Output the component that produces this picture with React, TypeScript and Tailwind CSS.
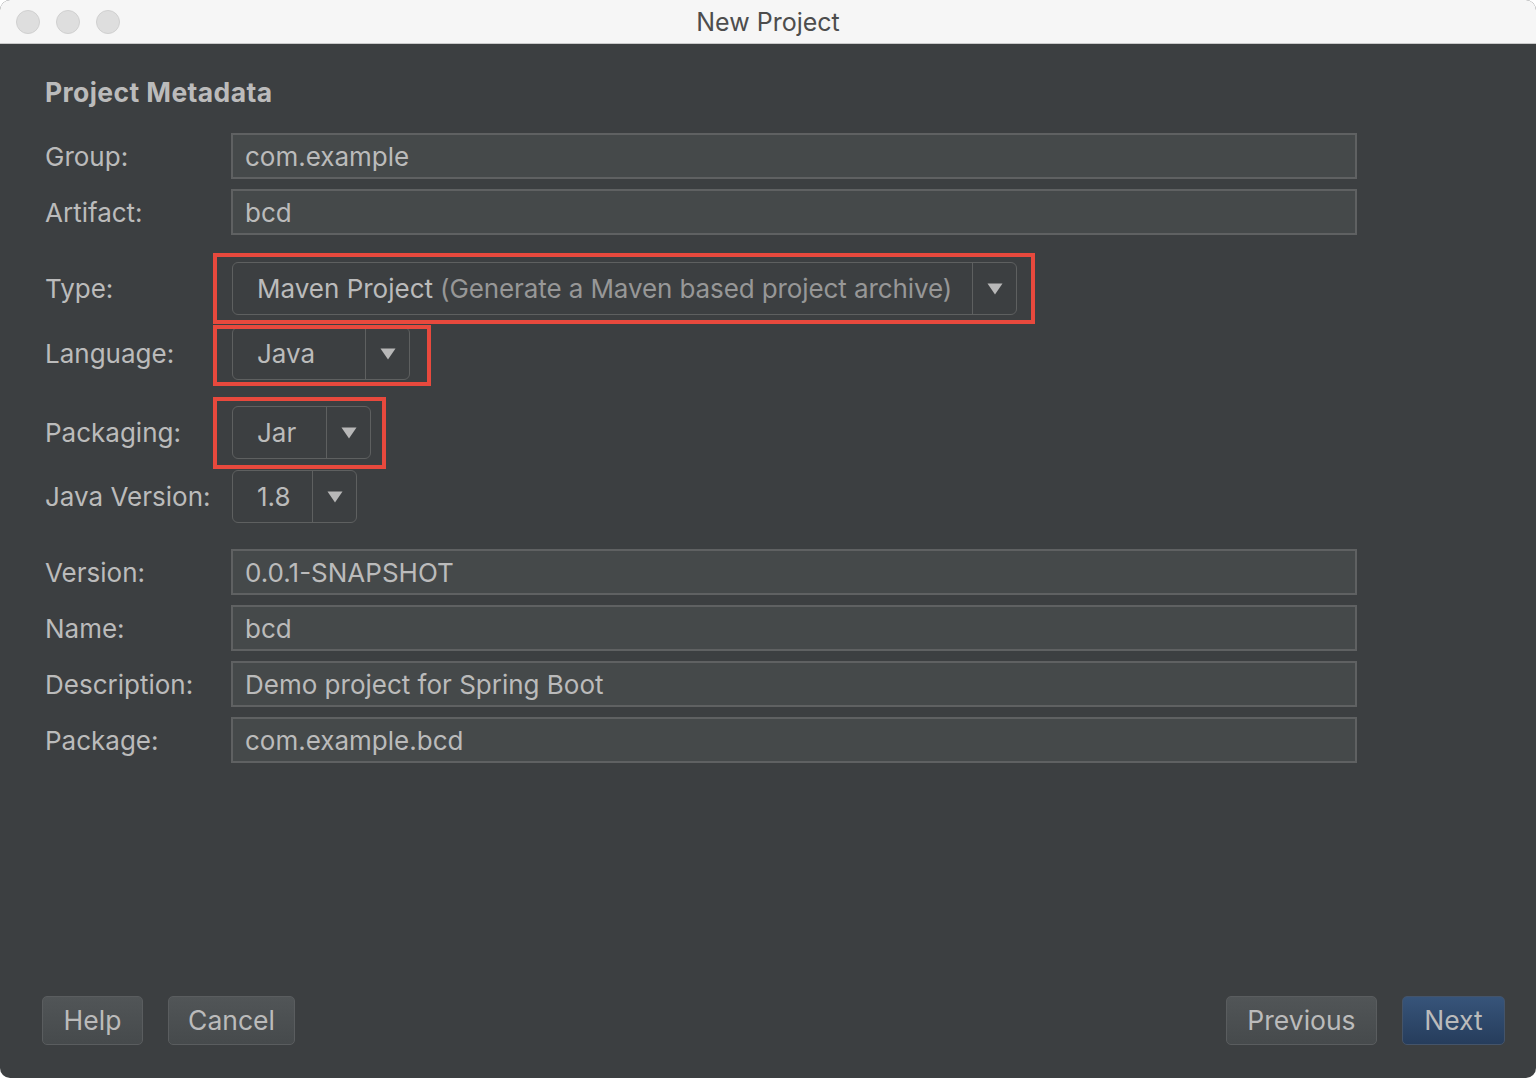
import React from "react";

const font = { fontFamily: '"Inter", "Liberation Sans", sans-serif' };

function TextField({ label, value }: { label: string; value: string }) {
  return (
    <div className="flex items-center">
      <div className="w-[186px] text-[26px] text-[#bbbbbb]">{label}</div>
      <div className="flex h-[46px] w-[1126px] items-center border-2 border-[#5f6162] bg-[#45494a] px-[12px] text-[26px] text-[#bbbbbb]">
        {value}
      </div>
    </div>
  );
}

function Arrow() {
  return (
    <svg width="16" height="12" viewBox="0 0 16 12">
      <path d="M0.5 0.5h15L8 11.5z" fill="#b8b8b8" />
    </svg>
  );
}

function Combo({
  width,
  children,
}: {
  width: string;
  children: React.ReactNode;
}) {
  return (
    <div
      className={`flex h-[53px] items-stretch rounded-[6px] border-[1.5px] border-[#5e6060] bg-[#3c3f41] ${width}`}
    >
      <div className="flex flex-1 items-center whitespace-nowrap pl-[24px] text-[26px] text-[#bbbbbb]">
        {children}
      </div>
      <div className="flex w-[44px] items-center justify-center border-l-[1.5px] border-[#5e6060]">
        <Arrow />
      </div>
    </div>
  );
}

function Button({
  children,
  width,
  primary = false,
}: {
  children: React.ReactNode;
  width: string;
  primary?: boolean;
}) {
  return (
    <div
      className={`flex h-[49px] items-center justify-center rounded-[5px] border-[1.5px] text-[26.5px] text-[#bbbbbb] ${width} ${
        primary
          ? "border-[#44546a] bg-gradient-to-b from-[#37547a] to-[#263d5c]"
          : "border-[#5a5d5f] bg-gradient-to-b from-[#515557] to-[#464a4c]"
      }`}
    >
      {children}
    </div>
  );
}

export default function App() {
  return (
    <div className="h-[1078px] w-[1536px] bg-white" style={font}>
      <div className="flex h-full flex-col overflow-hidden rounded-[10px] bg-[#3c3f41]">
        {/* title bar */}
        <div className="relative flex h-[44px] shrink-0 items-center justify-center border-b border-[#c9c9c9] bg-[#f6f6f6]">
          <div className="absolute left-[16px] top-[10px] flex gap-[16px]">
            <div className="h-[24px] w-[24px] rounded-full border border-[#d0d0d0] bg-[#dedede]" />
            <div className="h-[24px] w-[24px] rounded-full border border-[#d0d0d0] bg-[#dedede]" />
            <div className="h-[24px] w-[24px] rounded-full border border-[#d0d0d0] bg-[#dedede]" />
          </div>
          <span className="pt-[2px] text-[25px] text-[#4d4d4d]">New Project</span>
        </div>

        {/* form */}
        <div className="flex flex-1 flex-col px-[45px] pt-[32px]">
          <div className="text-[26.5px] font-bold leading-[32px] tracking-[0.4px] text-[#bbbbbb]">
            Project Metadata
          </div>

          <div className="mt-[25px] flex flex-col">
            <TextField label="Group:" value="com.example" />
            <div className="mt-[10px]">
              <TextField label="Artifact:" value="bcd" />
            </div>

            <div className="mt-[27px] flex items-center">
              <div className="w-[187px] text-[26px] text-[#bbbbbb]">Type:</div>
              <div className="relative">
                <Combo width="w-[785px]">
                  Maven Project
                  <span className="ml-[7px] tracking-[-0.1px] text-[#979797]">
                    (Generate a Maven based project archive)
                  </span>
                </Combo>
                <div className="pointer-events-none absolute -bottom-[9px] -left-[19px] -right-[18px] -top-[9px] border-[4.5px] border-[#e8493d]" />
              </div>
            </div>

            <div className="mt-[12px] flex items-center">
              <div className="w-[187px] text-[26px] text-[#bbbbbb]">Language:</div>
              <div className="relative">
                <Combo width="w-[178px]">Java</Combo>
                <div className="pointer-events-none absolute -bottom-[6px] -left-[19px] -right-[21px] -top-[2px] border-[4.5px] border-[#e8493d]" />
              </div>
            </div>

            <div className="mt-[26px] flex items-center">
              <div className="w-[187px] text-[26px] text-[#bbbbbb]">Packaging:</div>
              <div className="relative">
                <Combo width="w-[139px]">Jar</Combo>
                <div className="pointer-events-none absolute -bottom-[10px] -left-[19px] -right-[15px] -top-[9px] border-[4.5px] border-[#e8493d]" />
              </div>
            </div>

            <div className="mt-[11px] flex items-center">
              <div className="w-[187px] text-[26px] text-[#bbbbbb]">Java Version:</div>
              <Combo width="w-[125px]">1.8</Combo>
            </div>

            <div className="mt-[26px] flex flex-col gap-[10px]">
              <TextField label="Version:" value="0.0.1-SNAPSHOT" />
              <TextField label="Name:" value="bcd" />
              <TextField label="Description:" value="Demo project for Spring Boot" />
              <TextField label="Package:" value="com.example.bcd" />
            </div>
          </div>
        </div>

        {/* footer buttons */}
        <div className="flex shrink-0 items-center justify-between pb-[33px] pl-[42px] pr-[31px]">
          <div className="flex gap-[25px]">
            <Button width="w-[101px]">Help</Button>
            <Button width="w-[127px]">Cancel</Button>
          </div>
          <div className="flex gap-[25px]">
            <Button width="w-[151px]">Previous</Button>
            <Button width="w-[103px]" primary>
              Next
            </Button>
          </div>
        </div>
      </div>
    </div>
  );
}
